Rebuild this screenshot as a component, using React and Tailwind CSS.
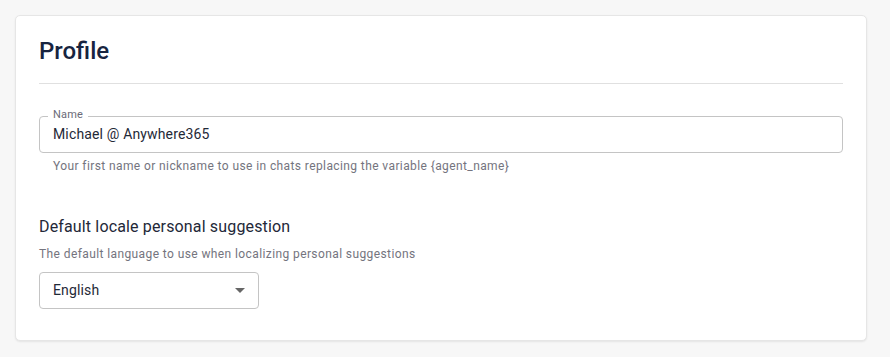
export default function App() {
  return (
    <div className="min-h-[357px] bg-[#f7f7f7] p-[15px] pr-[23px] font-['Roboto',sans-serif]">
      <div className="h-[326px] rounded-[5px] border border-[#e6e6e6] bg-white px-[23px] pt-[19px] shadow-[0_1px_2px_rgba(0,0,0,0.08)]">
        {/* Header */}
        <h1 className="text-[24px] leading-8 font-medium text-[#172440]">Profile</h1>
        <div className="mt-4 h-px bg-[#e0e0e0]" />

        {/* Name field */}
        <div className="relative mt-8">
          <div className="flex h-[37px] items-center rounded-[4px] border border-[#c4c4c4] px-[13px]">
            <span className="text-[14px] tracking-[0.15px] text-[#1f2937]">Michael @ Anywhere365</span>
          </div>
          <span className="absolute left-[9px] top-[-8px] bg-white px-[5px] text-[11px] leading-[14px] tracking-[0.2px] text-[#6b6b78]">
            Name
          </span>
        </div>
        <p className="mt-[5px] pl-[14px] text-[12px] leading-4 tracking-[0.4px] text-[#74747e]">
          Your first name or nickname to use in chats replacing the variable {"{agent_name}"}
        </p>

        {/* Locale */}
        <h2 className="mt-[43px] text-[16px] leading-5 tracking-[0.15px] text-[#232838]">
          Default locale personal suggestion
        </h2>
        <p className="mt-[9px] text-[12px] leading-4 tracking-[0.4px] text-[#74747e]">
          The default language to use when localizing personal suggestions
        </p>
        <div className="mt-[10px] flex h-[37px] w-[220px] items-center justify-between rounded-[4px] border border-[#c4c4c4] pl-[13px] pr-[13px]">
          <span className="text-[14px] tracking-[0.15px] text-[#1f2937]">English</span>
          <svg width="10" height="5" viewBox="0 0 10 5">
            <path d="M0 0h10L5 5z" fill="#666" />
          </svg>
        </div>
      </div>
    </div>
  );
}
